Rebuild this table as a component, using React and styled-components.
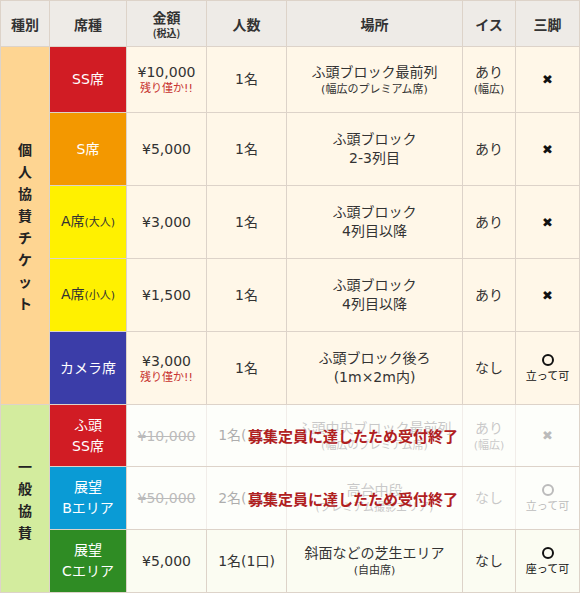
import React from "react";
import styled, { createGlobalStyle } from "styled-components";

const Global = createGlobalStyle`
  html, body { margin: 0; padding: 0; background: #fff; }
`;

const FONT = `"DejaVu Sans", "Noto Sans CJK JP", sans-serif`;

const Table = styled.table`
  border-collapse: collapse;
  table-layout: fixed;
  width: 579px;
  font-family: ${FONT};
  font-size: 14px;
  color: #333;
`;

const HeadRow = styled.tr`
  height: 46px;
`;

const Th = styled.th`
  background: #eeebe7;
  border: 1px solid #ddd3c9;
  font-family: "Noto Sans CJK JP", sans-serif;
  font-weight: 700;
  font-size: 14px;
  line-height: 18px;
  color: #333;
  padding: 0;
  vertical-align: middle;
`;

const Small = styled.span`
  display: block;
  font-size: ${(p) => p.$size || 11}px;
  line-height: ${(p) => p.$lh || 16}px;
  font-weight: ${(p) => p.$weight || 400};
  color: ${(p) => p.$color || "inherit"};
`;

const Row = styled.tr`
  height: ${(p) => p.$h}px;
`;

const Td = styled.td`
  background: ${(p) => p.$bg};
  color: ${(p) => p.$fg || "#333"};
  border: 1px solid #ddd3c9;
  text-align: center;
  vertical-align: middle;
  padding: 0 2px;
  line-height: 19px;
  position: ${(p) => (p.$anchor ? "relative" : "static")};
`;

const Category = styled.td`
  background: ${(p) => p.$bg};
  border: 1px solid #ddd3c9;
  padding: 0;
  vertical-align: middle;
  text-align: center;
`;

const Vertical = styled.div`
  width: 1em;
  margin: 0 auto;
  font-family: "Noto Sans CJK JP", sans-serif;
  font-weight: 700;
  font-size: 14px;
  line-height: 22px;
  color: #222;
  word-break: break-all;
`;

const SeatName = styled.span`
  display: block;
  line-height: 21px;
  font-size: 14px;
`;

const SeatSub = styled.span`
  font-size: 11px;
`;

const Price = styled.span`
  display: block;
  line-height: 18px;
  color: ${(p) => (p.$sold ? "#555" : "#333")};
  text-decoration: ${(p) => (p.$sold ? "line-through" : "none")};
`;

const Line = styled.span`
  display: block;
  line-height: ${(p) => p.$lh || 19}px;
  font-size: ${(p) => p.$size || 14}px;
  color: ${(p) => p.$color || "inherit"};
`;

const Cross = styled.span`
  font-family: "DejaVu Sans", sans-serif;
  font-size: 13px;
  color: ${(p) => p.$color || "#111"};
`;

const Circle = styled.span`
  display: block;
  width: 8px;
  height: 8px;
  margin: 0 auto 2px;
  border: 2px solid ${(p) => p.$color || "#111"};
  border-radius: 50%;
`;

const Note = styled.span`
  display: block;
  font-family: "Noto Sans CJK JP", sans-serif;
  font-size: 11px;
  line-height: 14px;
  color: ${(p) => p.$color || "#333"};
`;

const SoldOverlay = styled.div`
  position: absolute;
  left: 0;
  top: 0;
  bottom: 0;
  width: 452px;
  background: rgba(255, 255, 255, 0.6);
  display: flex;
  align-items: center;
  justify-content: center;
  z-index: 1;
  font-family: "Noto Sans CJK JP", serif;
  font-weight: 700;
  font-size: 15px;
  color: #b0201f;
  letter-spacing: 0;
  pointer-events: none;
`;

const CREAM = "#fff7e8";
const LIGHT = "#fbfcf2";

const Tripod = ({ kind, note, color }) =>
  kind === "x" ? (
    <Cross $color={color}>✖</Cross>
  ) : (
    <>
      <Circle $color={color} />
      <Note $color={color}>{note}</Note>
    </>
  );

const personal = [
  {
    h: 66,
    seat: <SeatName>SS席</SeatName>,
    bg: "#d11c24",
    fg: "#fff",
    price: "¥10,000",
    few: true,
    num: "1名",
    place: [["ふ頭ブロック最前列", 14], ["(幅広のプレミアム席)", 11]],
    chair: [["あり", 14], ["(幅広)", 11]],
    tripod: { kind: "x" },
  },
  {
    h: 73,
    seat: <SeatName>S席</SeatName>,
    bg: "#f39800",
    fg: "#fff",
    price: "¥5,000",
    num: "1名",
    place: [["ふ頭ブロック", 14], ["2-3列目", 14]],
    chair: [["あり", 14]],
    tripod: { kind: "x" },
  },
  {
    h: 73,
    seat: (
      <SeatName>
        A席<SeatSub>(大人)</SeatSub>
      </SeatName>
    ),
    bg: "#fff100",
    fg: "#333",
    price: "¥3,000",
    num: "1名",
    place: [["ふ頭ブロック", 14], ["4列目以降", 14]],
    chair: [["あり", 14]],
    tripod: { kind: "x" },
  },
  {
    h: 73,
    seat: (
      <SeatName>
        A席<SeatSub>(小人)</SeatSub>
      </SeatName>
    ),
    bg: "#fff100",
    fg: "#333",
    price: "¥1,500",
    num: "1名",
    place: [["ふ頭ブロック", 14], ["4列目以降", 14]],
    chair: [["あり", 14]],
    tripod: { kind: "x" },
  },
  {
    h: 73,
    seat: <SeatName>カメラ席</SeatName>,
    bg: "#3b3da8",
    fg: "#fff",
    price: "¥3,000",
    few: true,
    num: "1名",
    place: [["ふ頭ブロック後ろ", 14], ["(1m×2m内)", 14]],
    chair: [["なし", 14]],
    tripod: { kind: "o", note: "立って可" },
  },
];

const general = [
  {
    h: 62,
    seat: (
      <>
        <SeatName>ふ頭</SeatName>
        <SeatName>SS席</SeatName>
      </>
    ),
    bg: "#d11c24",
    fg: "#fff",
    price: "¥10,000",
    sold: true,
    num: "1名(1口)",
    place: [["ふ頭中央ブロック最前列", 14], ["(幅広のプレミアム席)", 11]],
    chair: [["あり", 14], ["(幅広)", 11]],
    tripod: { kind: "x" },
  },
  {
    h: 63,
    seat: (
      <>
        <SeatName>展望</SeatName>
        <SeatName>Bエリア</SeatName>
      </>
    ),
    bg: "#0a9bd5",
    fg: "#fff",
    price: "¥50,000",
    sold: true,
    num: "2名(1口)",
    place: [["高台中段", 14], ["(プレミアム撮影エリア)", 11]],
    chair: [["なし", 14]],
    tripod: { kind: "o", note: "立って可" },
  },
  {
    h: 63,
    seat: (
      <>
        <SeatName>展望</SeatName>
        <SeatName>Cエリア</SeatName>
      </>
    ),
    bg: "#2f8c24",
    fg: "#fff",
    price: "¥5,000",
    num: "1名(1口)",
    place: [["斜面などの芝生エリア", 14], ["(自由席)", 11]],
    chair: [["なし", 14]],
    tripod: { kind: "o", note: "座って可" },
  },
];

const BodyRow = ({ r, bg, category }) => {
  const faded = r.sold ? "#777" : undefined;
  return (
    <Row $h={r.h}>
      {category}
      <Td $bg={r.bg} $fg={r.fg}>
        {r.seat}
      </Td>
      <Td $bg={bg} $anchor={r.sold}>
        <Price $sold={r.sold}>{r.price}</Price>
        {r.few && (
          <Small $size={11} $lh={15} $color="#c7322f">
            残り僅か!!
          </Small>
        )}
        {r.sold && <SoldOverlay>募集定員に達したため受付終了</SoldOverlay>}
      </Td>
      <Td $bg={bg}>{r.num}</Td>
      <Td $bg={bg}>
        {r.place.map(([t, s], i) => (
          <Line key={i} $size={s} $lh={s === 11 ? 15 : 19} $color={faded}>
            {t}
          </Line>
        ))}
      </Td>
      <Td $bg={bg}>
        {r.chair.map(([t, s], i) => (
          <Line key={i} $size={s} $lh={s === 11 ? 15 : 19} $color={faded}>
            {t}
          </Line>
        ))}
      </Td>
      <Td $bg={bg}>
        <Tripod {...r.tripod} color={r.sold ? "#555" : "#111"} />
      </Td>
    </Row>
  );
};

export default function App() {
  return (
    <>
      <Global />
      <Table>
        <colgroup>
          <col style={{ width: 49 }} />
          <col style={{ width: 77 }} />
          <col style={{ width: 80 }} />
          <col style={{ width: 80 }} />
          <col style={{ width: 176 }} />
          <col style={{ width: 53 }} />
          <col style={{ width: 64 }} />
        </colgroup>
        <thead>
          <HeadRow>
            <Th>種別</Th>
            <Th>席種</Th>
            <Th>
              金額
              <Small $size={10} $lh={14} $weight={700}>
                (税込)
              </Small>
            </Th>
            <Th>人数</Th>
            <Th>場所</Th>
            <Th>イス</Th>
            <Th>三脚</Th>
          </HeadRow>
        </thead>
        <tbody>
          {personal.map((r, i) => (
            <BodyRow
              key={"p" + i}
              r={r}
              bg={CREAM}
              category={
                i === 0 ? (
                  <Category rowSpan={5} $bg="#fed592">
                    <Vertical>個人協賛チケット</Vertical>
                  </Category>
                ) : null
              }
            />
          ))}
          {general.map((r, i) => (
            <BodyRow
              key={"g" + i}
              r={r}
              bg={LIGHT}
              category={
                i === 0 ? (
                  <Category rowSpan={3} $bg="#d3ec9e">
                    <Vertical>一般協賛</Vertical>
                  </Category>
                ) : null
              }
            />
          ))}
        </tbody>
      </Table>
    </>
  );
}
